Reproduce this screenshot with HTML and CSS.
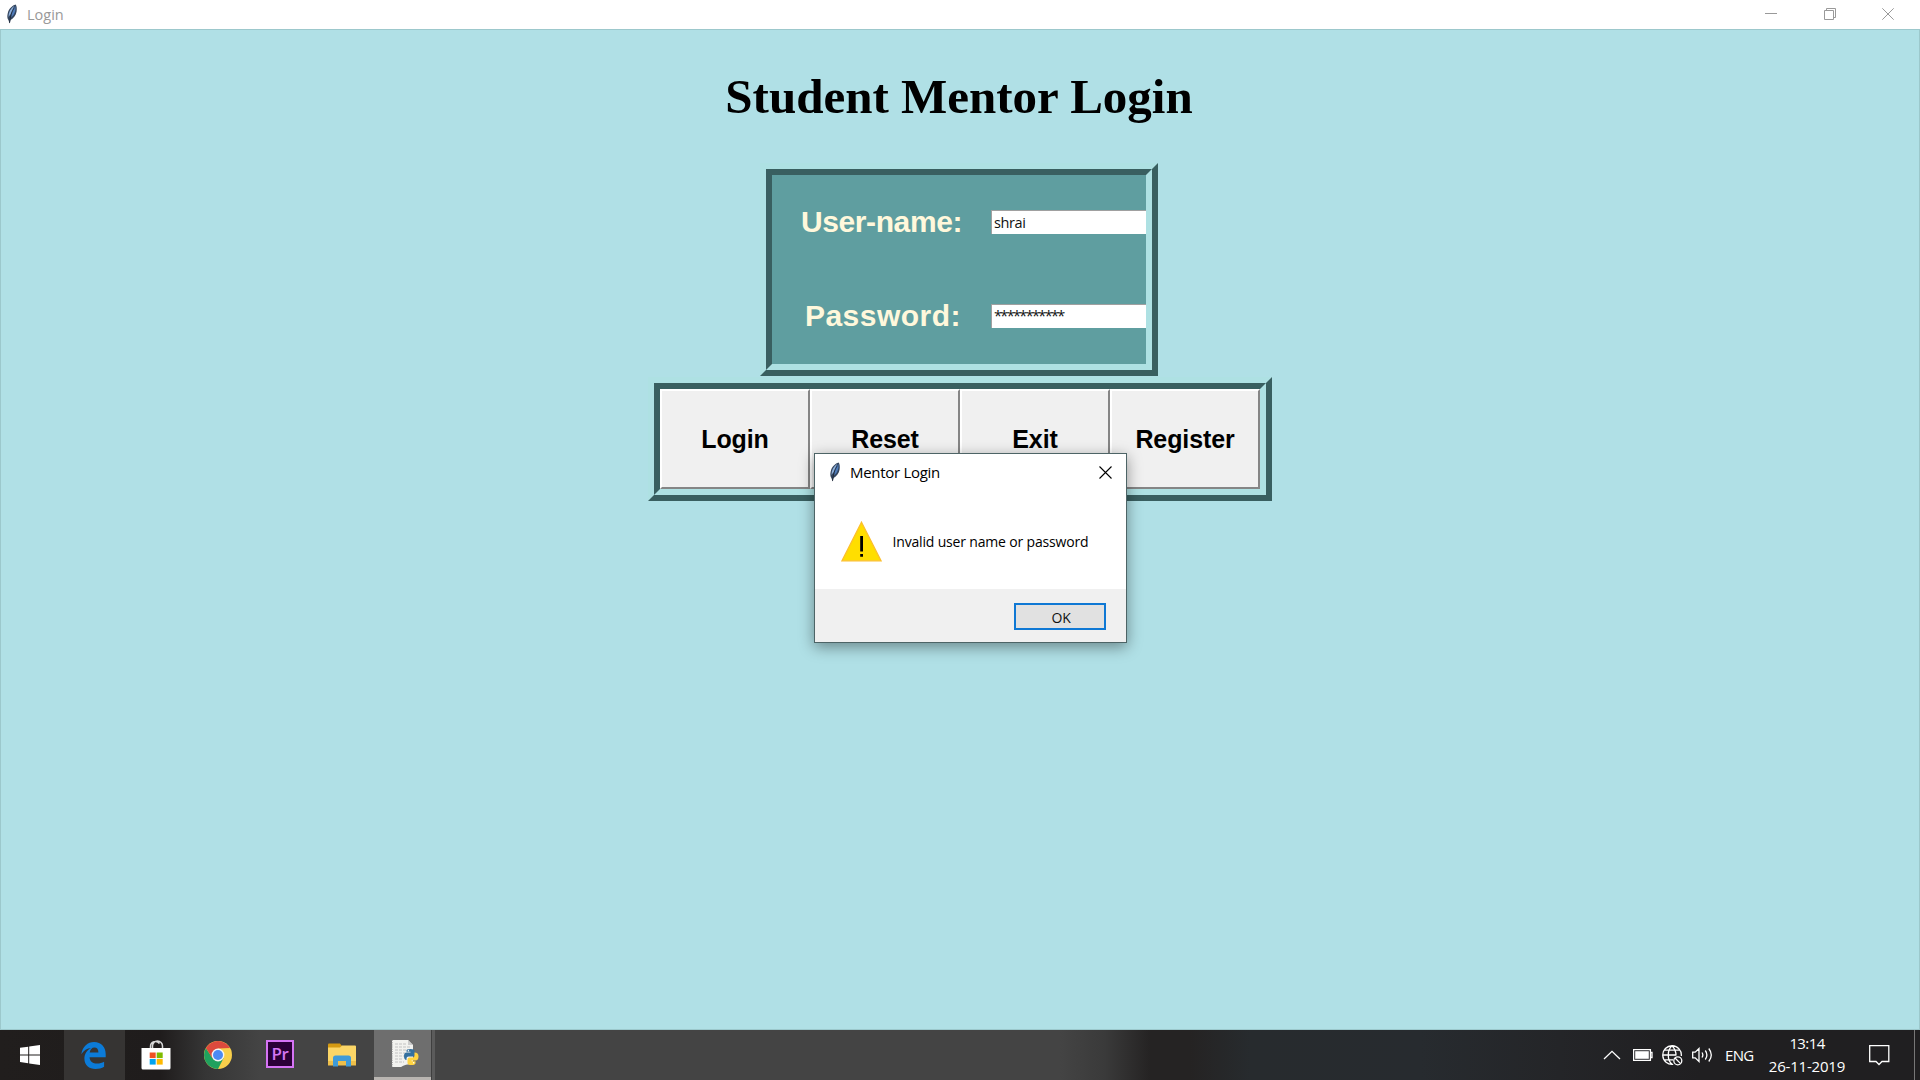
FILE: index.html
```html
<!DOCTYPE html>
<html lang="en">
<head>
<meta charset="utf-8">
<title>Login</title>
<link rel="stylesheet" href="styles.css">
</head>
<body>
<svg class="defs" aria-hidden="true">
  <symbol id="feather" viewBox="0 0 12 20">
    <path d="M9.6 0.6C6.4 1.6 3 4.6 1.8 9 1 12.200 1.200 14.400 2.400 16L3.600 19.400 4.600 16C7.600 14.400 10 11 10.600 7.400 11 4.600 10.800 2.200 9.600.6Z" fill="#34455e"/>
    <path d="M9.300 2C7 4.400 5.400 8 5.200 13.400 8.400 10.800 10.200 6.400 9.300 2Z" fill="#4f7cba"/>
    <path d="M8.200 1.800C4.600 4.600 2.600 8 2.400 13L4.400 10.400Z" fill="#8fb0da"/>
    <path d="M8.400 3.600C5.400 8 4.200 13 3.500 19" fill="none" stroke="#17202e" stroke-width=".7"/>
  </symbol>
</svg>
<div class="desktop">
  <header class="titlebar">
    <svg class="app-icon" width="12" height="20"><use href="#feather"/></svg>
    <span class="titlebar-text">Login</span>
    <div class="window-controls">
      <svg width="12" height="12" viewBox="0 0 12 12"><path d="M0 5.500H12"/></svg>
      <svg width="12" height="12" viewBox="0 0 12 12"><path d="M.5 2.500h9v9h-9zM2.500 2.500v-2h9v9h-2"/></svg>
      <svg width="12" height="12" viewBox="0 0 12 12"><path d="M.3.3 11.700 11.700M11.700.3.3 11.700"/></svg>
    </div>
  </header>

  <main class="window-body">
    <h1 class="heading">Student Mentor Login</h1>
    <section class="ridge form-frame">
      <div class="ridge-inner form">
        <label class="label" for="user">User-name:</label>
        <input class="entry" id="user" type="text" value="shrai">
        <label class="label label-password" for="pass">Password:</label>
        <input class="entry entry-password" id="pass" type="text" value="***********">
      </div>
    </section>
    <section class="ridge button-frame">
      <div class="ridge-inner buttons">
        <button class="tk-button">Login</button>
        <button class="tk-button">Reset</button>
        <button class="tk-button">Exit</button>
        <button class="tk-button">Register</button>
      </div>
    </section>
  </main>

  <footer class="taskbar">
    <div class="task start"><svg width="20" height="20" viewBox="0 0 20 20"><path fill="#fff" d="M0 2.800 8.200 1.700V9.400H0zM9.200 1.500 20 0V9.400H9.200zM0 10.400H8.200V18.200L0 17.100zM9.200 10.400H20V20L9.200 18.400z"/></svg></div>
    <div class="task edge"><svg width="25" height="27" viewBox="0 0 25 27"><path fill="#0c7bd8" d="M.3 12.200C1.500 4.400 6.800 0 13 0c7.400 0 11.700 5.200 11.700 12v3.200H8.600c.1 4.300 3.400 6.400 7.500 6.400 2.700 0 5-.8 7-1.900v5.100c-2.300 1.500-5.300 2.200-8.600 2.200-6.500 0-11.100-4.200-11.100-10.300 0-4.900 2.700-9 6.700-10.800C6.200 6 2.600 8.200.3 12.200ZM8.700 10.500h8.700c0-3-1.300-4.900-4-4.900-2.500 0-4.300 2.100-4.700 4.900Z"/></svg></div>
    <div class="task store"><svg width="30" height="30" viewBox="0 0 30 30"><path d="M9.500 8.500V6.500a5 5 0 0 1 9-3M11.500 8.500V6a5 5 0 0 1 10 0v2.500" fill="none" stroke="#d8d8d8" stroke-width="1.500"/><path d="M0.500 8H29.500V28q0 1.500-1.500 1.500H2Q.5 29.500.5 28z" fill="#fff"/><path d="M8.700 12.500h6v5.600h-6z" fill="#f05123"/><path d="M15.700 12.500h6v5.600h-6z" fill="#7fbb00"/><path d="M8.700 19h6v5.600h-6z" fill="#00a3ef"/><path d="M15.700 19h6v5.600h-6z" fill="#ffb901"/></svg></div>
    <div class="task"><svg width="28" height="28" viewBox="0 0 28 28"><circle cx="14" cy="14" r="14" fill="#f8cf4b"/><path d="M1.900 7A14 14 0 0 0 14 28L19.500 17.200 14 14 8.500 17.200Z" fill="#20a15e"/><path d="M1.900 7 8.400 17.200 14 14V7.500L26.100 7A14 14 0 0 0 1.900 7Z" fill="#dc4a3d"/><circle cx="14" cy="14" r="6.400" fill="#f5f5f5"/><circle cx="14" cy="14" r="5" fill="#4b8af3"/></svg></div>
    <div class="task premiere"><span class="premiere-icon">Pr</span></div>
    <div class="task"><svg width="28" height="24" viewBox="0 0 28 24"><path d="M0 1.500Q0 .5 1 .5H12l2 2.500-2 3H0z" fill="#d49a13"/><path d="M0 4.500H12L14 2.500H27q1 0 1 1V22H0z" fill="#fbd667"/><path d="M0 18H28V22.500H0z" fill="#eebf4a"/><path d="M5 23.500V15q0-2.500 2.500-2.500h13Q23 12.500 23 15v8.500h-5V18h-8v5.500z" fill="#3f9bd9"/></svg></div>
    <div class="task python"><svg width="28" height="29" viewBox="0 0 28 29"><path d="M1 1H17L22 6V25Q14 25 10 28H1z" fill="#f2f2ef"/><path d="M17 1V6H22z" fill="#ccc"/><path d="M.8 1V28" stroke="#777" stroke-width="1.500" stroke-dasharray="1 1.200"/><path d="M4 5H15M4 8H19M4 11H17M4 14H14M4 17H13M4 20H12M4 23H13" stroke="#c2c2c2" stroke-dasharray="3 1"/><path d="M15.500 11.500q0-1.500 4-1.500t4 2v4q0 1.500-2 1.500h-4q-2 0-2 2V21q-2.500 0-2.500-4 0-3.500 2.500-3.500h4v-.7h-4z" fill="#34709f"/><path d="M23.500 13.500q4 0 4 4 0 4-3 4h-4v.7h4V24q0 2-4 2t-4-2v-3.500q0-2 2-2h3.500q1.500 0 1.500-2z" fill="#ffd340"/><circle cx="17.400" cy="11.800" r=".7" fill="#fff"/><circle cx="22.600" cy="23.800" r=".7" fill="#fff"/></svg></div>
    <div class="stack-edge"></div>
    <div class="tray">
      <svg width="18" height="10" viewBox="0 0 18 10"><path d="M1 9 9 1.300 17 9"/></svg>
      <svg class="battery" width="20" height="12" viewBox="0 0 20 12"><path d="M.6.6h16.800v10.800H.6zM17.500 3.500h1.500v5h-1.500"/><path d="M2.200 2.200h13.600v7.600H2.200z" class="solid"/></svg>
      <svg class="globe" width="21" height="21" viewBox="0 0 21 21"><path d="M11.200 19.300A9.300 9.300 0 1 1 19.300 11M10 .7C5 5 5 15 10 19.300M10 .7Q14 4.500 14 10.500M1 10H14M2.200 5.200H17.800M2.200 14.800H11"/><circle cx="15.800" cy="15.800" r="4"/><path d="M13 13 18.600 18.600"/></svg>
      <svg class="speaker" width="22" height="16" viewBox="0 0 22 16"><path d="M.7 5.200H3.200L7 1.500v13L3.200 10.800H.7zM10 5.500q1.700 2.500 0 5M13.300 3.500q3.200 4.500 0 9M16.800 1.500q5 6.500 0 13"/></svg>
      <span class="language">ENG</span>
      <div class="clock"><span>13:14</span><span class="date">26-11-2019</span></div>
      <svg class="notice" width="21" height="21" viewBox="0 0 21 21"><path d="M.7.7H19.800V16.500H13L10 19.500 7 16.500H.7z"/></svg>
      <div class="show-desktop"></div>
    </div>
  </footer>

  <div class="dialog" role="alertdialog">
    <div class="dialog-title">
      <svg width="12" height="20"><use href="#feather"/></svg>
      <span class="dialog-title-text">Mentor Login</span>
      <svg class="dialog-close" width="13" height="13" viewBox="0 0 13 13"><path d="M.5.5 12.500 12.500M12.500.5.5 12.500" stroke="#000" stroke-width="1.100"/></svg>
    </div>
    <div class="dialog-message">
      <svg width="41" height="41" viewBox="0 0 41 41"><path d="M20.500 1.200 40 39.800H1z" fill="#ffde00" stroke="#fcbf2e" stroke-width="1.300"/><path d="M19.200 15h2.800v15.500h-2.800zM19.200 33h2.800v2.700h-2.800z" fill="#000"/></svg>
      <span class="message-text">Invalid user name or password</span>
    </div>
    <div class="dialog-actions"><button class="ok">OK</button></div>
  </div>
</div>
</body>
</html>
```
FILE: styles.css
```css
* { box-sizing: border-box; }

body {
  margin: 0;
  overflow: hidden;
  font-family: "Open Sans", "Noto Sans", sans-serif;
}

.defs { display: none; }

.desktop {
  position: relative;
  display: flex;
  flex-direction: column;
  width: 1920px;
  height: 1080px;
}

svg { display: block; flex: none; }

/* Main window */
.titlebar {
  display: flex;
  align-items: center;
  height: 29px;
  padding: 0 26px 1px 6px;
  background: #fff;
}

.titlebar-text {
  margin-left: 9px;
  font-size: 14.5px;
  color: #999;
}

.window-controls {
  display: flex;
  gap: 46.500px;
  margin-left: auto;
  fill: none;
  stroke: #999;
}

.window-body {
  display: flex;
  flex-direction: column;
  align-items: center;
  height: 1001px;
  border: 1px solid #9cc8cc;
  background: #b0e0e6;
}

.heading {
  height: 57px;
  margin: 38px 2px 38px 0;
  font: bold 49px/57px "Liberation Serif", serif;
  color: #000;
}

/* Ridge relief: two opposite bevels, one inside the other */
.ridge {
  border: 6px solid;
  border-color: #aee1e3 #395f60 #395f60 #aee1e3;
}

.ridge-inner {
  height: 100%;
  border: 6px solid;
  border-color: #395f60 #aee1e3 #aee1e3 #395f60;
  background: #5f9ea0;
}

.form-frame { width: 398px; height: 213px; margin-right: 2px; }

.form {
  display: grid;
  grid-template-columns: 219px 1fr;
  grid-template-rows: 94px 94px;
  align-items: center;
}

.label {
  text-align: center;
  font: bold 30px/34px "Liberation Sans", sans-serif;
  letter-spacing: -.4px;
  color: #fff8dc;
}

.label-password { padding-left: 3px; letter-spacing: .5px; }

.entry {
  width: 100%;
  height: 24px;
  padding: 0 0 0 2px;
  border: 0;
  border-top: 1px solid #a0a0a0;
  border-left: 1px solid #a0a0a0;
  border-radius: 0;
  outline: 0;
  background: #fff;
  font: 14.500px/20px "Open Sans", sans-serif;
  letter-spacing: -.4px;
  color: #111;
}

.entry-password { padding-bottom: 2px; letter-spacing: -1.650px; }

.button-frame {
  width: 624px;
  height: 124px;
  margin-top: 1px;
}

.buttons {
  display: grid;
  grid-template-columns: repeat(4, 1fr);
}

.tk-button {
  padding: 0;
  border: 2px solid;
  border-color: #fff #858585 #858585 #fff;
  border-radius: 0;
  background: #f0f0f0;
  font: bold 25px/28px "Liberation Sans", sans-serif;
  letter-spacing: -.1px;
  color: #000;
}

/* Message box */
.dialog {
  position: absolute;
  left: 814px;
  top: 453px;
  display: flex;
  flex-direction: column;
  width: 313px;
  height: 190px;
  border: 1px solid #4d6466;
  background: #fff;
  box-shadow: 0 4px 14px rgba(0, 0, 0, .4);
}

.dialog-title {
  display: flex;
  align-items: center;
  height: 36px;
  padding: 0 14px 0 14px;
}

.dialog-title-text {
  margin-left: 9px;
  font-size: 15px;
  letter-spacing: -.3px;
  color: #000;
}

.dialog-close { margin-left: auto; }

.dialog-message {
  display: flex;
  align-items: center;
  gap: 10.500px;
  flex: 1;
  padding: 3px 0 0 26px;
}

.message-text {
  font-size: 14px;
  letter-spacing: -.17px;
  padding-top: 1px;
  color: #000;
  white-space: nowrap;
}

.dialog-actions {
  display: flex;
  justify-content: flex-end;
  height: 53px;
  padding: 14px 20px 0 0;
  background: #f0f0f0;
}

.ok {
  width: 92px;
  height: 27px;
  padding: 2px 0 0 2px;
  border: 2px solid #0f78d4;
  border-radius: 0;
  background: #e1e1e1;
  font: 14px/20px "Open Sans", sans-serif;
  letter-spacing: -.3px;
  color: #111;
}

/* Taskbar */
.taskbar {
  display: flex;
  height: 50px;
  background: linear-gradient(90deg, #211e1d 0, #1f1c1c 160px, #353535 205px, #444 260px, #444 1060px, #3a3a3a 1105px, #252323 1150px, #252323 1190px, #272b2e 1250px, #272b2f 1420px, #242528 1560px, #201f21 1700px);
}

.task {
  display: flex;
  align-items: center;
  justify-content: center;
  width: 62px;
}

.start { width: 64px; padding-right: 4px; }
.edge { width: 61px; padding-right: 2px; background: #363433; }
.store { padding-right: 1px; }

.premiere-icon {
  width: 28px;
  height: 28px;
  margin-bottom: 2px;
  border: 2px solid #d674f5;
  background: #2b0037;
  font: 600 17px/23px "Open Sans", sans-serif;
  letter-spacing: -.5px;
  text-align: center;
  color: #d674f5;
}

.python {
  width: 57px;
  margin-left: 1px;
  padding-left: 5px;
  border-bottom: 3px solid #b9b5b1;
  background: #6e6e6e;
}

.stack-edge {
  width: 4px;
  border-left: 1px solid #3f3f3f;
  background: #5b5b5b;
}

.tray {
  display: flex;
  align-items: center;
  margin-left: auto;
  color: #fff;
  fill: none;
  stroke: #fff;
  stroke-width: 1.300;
}

.battery { margin-left: 12px; }
.battery .solid { fill: #fff; stroke: none; }
.globe { margin-left: 9px; }
.speaker { margin-left: 9px; }

.language {
  width: 30px;
  margin-left: 11px;
  font-size: 15px;
  letter-spacing: -.7px;
}

.clock {
  display: flex;
  flex-direction: column;
  align-items: center;
  width: 80px;
  margin-left: 12px;
  font-size: 15px;
  line-height: 23px;
  letter-spacing: -.6px;
}

.date { letter-spacing: -.2px; }

.notice { margin-left: 22px; }

.show-desktop {
  width: 6px;
  height: 50px;
  margin-left: 24px;
  border-left: 1px solid #777;
}
```
